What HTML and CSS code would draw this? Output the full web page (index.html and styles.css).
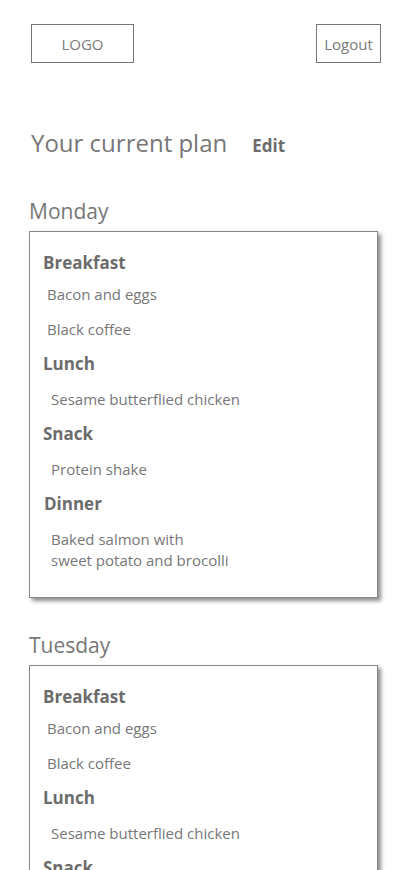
FILE: index.html
```html
<!DOCTYPE html>
<html lang="en">
<head>
<meta charset="utf-8">
<title>Your current plan</title>
<link rel="stylesheet" href="styles.css">
</head>
<body>
<header class="header">
  <div class="box logo">LOGO</div>
  <div class="box logout">Logout</div>
</header>
<div class="title-row">
  <h1 class="title">Your current plan</h1>
  <span class="edit">Edit</span>
</div>

<section class="day">
  <h2 class="day-name">Monday</h2>
  <div class="card">
    <h3 class="meal">Breakfast</h3>
    <p class="item item-first item-a">Bacon and eggs</p>
    <p class="item item-a">Black coffee</p>
    <h3 class="meal">Lunch</h3>
    <p class="item item-b">Sesame butterflied chicken</p>
    <h3 class="meal">Snack</h3>
    <p class="item item-b">Protein shake</p>
    <h3 class="meal meal-d">Dinner</h3>
    <p class="item item-b">Baked salmon with<br>sweet potato and brocolli</p>
  </div>
</section>

<section class="day day-next">
  <h2 class="day-name">Tuesday</h2>
  <div class="card">
    <h3 class="meal">Breakfast</h3>
    <p class="item item-first item-a">Bacon and eggs</p>
    <p class="item item-a">Black coffee</p>
    <h3 class="meal">Lunch</h3>
    <p class="item item-b">Sesame butterflied chicken</p>
    <h3 class="meal">Snack</h3>
    <p class="item item-b">Protein shake</p>
    <h3 class="meal meal-d">Dinner</h3>
    <p class="item item-b">Baked salmon with<br>sweet potato and brocolli</p>
  </div>
</section>
</body>
</html>
```

FILE: styles.css
```css
* { box-sizing: border-box; }
html, body { margin: 0; padding: 0; background: #fff; }
body {
  font-family: "Open Sans", "Noto Sans", sans-serif;
  color: #767676;
  overflow: hidden;
}
.header {
  display: flex;
  justify-content: space-between;
  padding: 24px 31px 0 31px;
}
.box {
  height: 39px;
  border: 1px solid #777;
  display: flex;
  align-items: center;
  justify-content: center;
  font-size: 15px;
  color: #7a7a7a;
}
.logo { width: 103px; }
.logout { width: 65px; font-size: 15px; }
.title-row {
  display: flex;
  align-items: baseline;
  gap: 25px;
  margin-top: 64px;
  padding-left: 31px;
}
.title {
  margin: 0;
  font-size: 24px;
  line-height: 32px;
  font-weight: 400;
  color: #777;
}
.edit {
  font-size: 17px;
  font-weight: 700;
  color: #6c6c6c;
}
.day { padding-left: 29px; margin-top: 38px; }
.day-next { margin-top: 33px; }
.day-name {
  margin: 0 0 6px 0;
  font-size: 21px;
  line-height: 28px;
  font-weight: 400;
  color: #777;
}
.card {
  width: 349px;
  border: 1px solid #888;
  box-shadow: 3px 3px 4px rgba(0,0,0,0.45);
  padding: 19px 0 26px 0;
  background: #fff;
}
.meal {
  margin: 11.5px 0 0 13px;
  font-size: 17px;
  line-height: 24px;
  font-weight: 700;
  color: #6c6c6c;
}
.meal:first-child { margin-top: 0; }
.meal-d { margin-left: 14px; }
.item {
  margin: 13.5px 0 0 0;
  font-size: 15px;
  line-height: 21px;
  color: #777;
}
.item-a { margin-left: 17px; margin-top: 14px; }
.item-first { margin-top: 9px; }
.item-b { margin-left: 21px; }
```
